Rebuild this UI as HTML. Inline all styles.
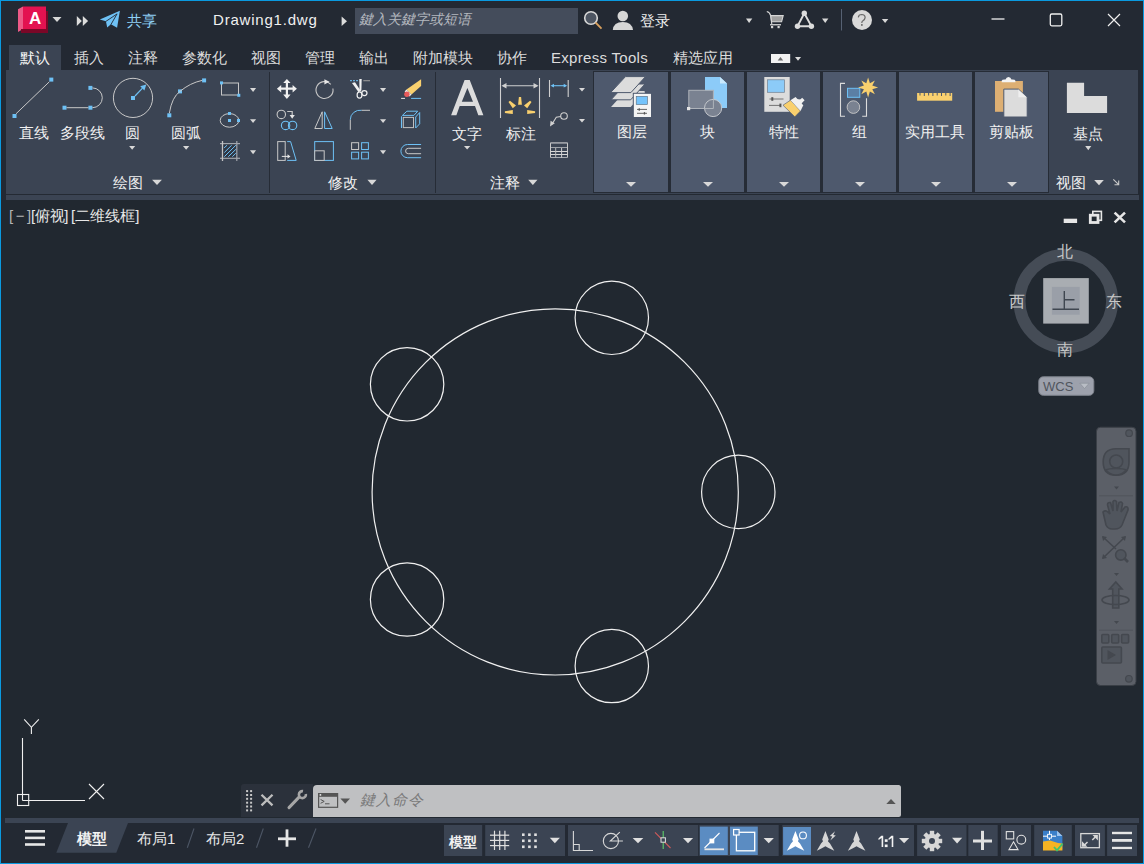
<!DOCTYPE html>
<html><head><meta charset="utf-8">
<style>
*{margin:0;padding:0;box-sizing:border-box}
html,body{width:1144px;height:864px;overflow:hidden;background:#0A9AE0;font-family:"Liberation Sans",sans-serif;color:#f0f0f0}
.a{position:absolute}
#win{position:absolute;left:1px;top:1px;width:1142px;height:862px;background:#232933;overflow:hidden}
.t{position:absolute;white-space:nowrap;font-size:15px;line-height:1}
svg{position:absolute;overflow:visible}
</style></head><body>
<div id="win"></div>
<!-- title bar -->
<div class="a" style="left:355px;top:8px;width:223px;height:26px;background:#444c5b"></div>
<!-- TITLE -->
<svg class="a" style="left:0;top:0" width="1144" height="40">
<polygon points="18,9.3 23,6.5 23,29 18,32" fill="#ec5a87"/>
<rect x="23" y="6.5" width="23" height="22.5" fill="#e31250"/>
<polygon points="21,29 46,29 46,11 48,11 48,33 21,33" fill="#7b0727"/>
<polygon points="52.5,17 61.5,17 57,22" fill="#d8d8d8"/>
<polygon points="76.8,16 81.8,21 76.8,26" fill="#dcdcdc"/>
<polygon points="82.8,16 88.1,21 82.8,26" fill="#dcdcdc"/>
<polygon points="119.9,10.8 99.8,19.45 105.9,21.2 107.2,27.6 110.9,24.3 117.1,27.8" fill="#6ec1f5"/>
<path d="M105.6,21.6 L117.2,13.8 M110.9,24.6 L117,14" stroke="#222832" stroke-width="0.9" fill="none"/>
<polygon points="346,16.6 341.5,21.3 341.5,26" fill="none"/>
<polygon points="341.6,16.6 347,21.3 341.6,26" fill="#dcdcdc"/>
<circle cx="591" cy="18" r="6.3" fill="#4d5562" stroke="#d8d8d8" stroke-width="1.6"/>
<line x1="595.5" y1="22.5" x2="601.5" y2="28.7" stroke="#d9a05e" stroke-width="1.8"/>
<circle cx="622.8" cy="16" r="5.3" fill="#d6d6d6"/>
<path d="M612.8,30 Q613.5,22 622.8,22 Q632,22 633,30 Z" fill="#d6d6d6"/>
<polygon points="746,18.6 752.3,18.6 749.1,23" fill="#d8d8d8"/>
<polygon points="822,18.6 828.4,18.6 825.2,23" fill="#d8d8d8"/>
<polygon points="881.9,18.9 888.3,18.9 885.1,22.9" fill="#d8d8d8"/>
<rect x="841" y="9" width="1" height="21.5" fill="#566173"/>
<circle cx="862" cy="20" r="10" fill="#d9d9d9"/>
<path d="M858.3,17.4 Q858.6,14.5 861.7,14.5 Q865.1,14.6 865.1,17.6 Q865,19.6 862.7,20.9 Q861.8,21.6 861.8,23" fill="none" stroke="#6a6a6a" stroke-width="1.2"/>
<rect x="861" y="24.1" width="1.7" height="1.7" fill="#6a6a6a"/>
<path d="M766.8,11.5 Q769.8,12.3 770.6,15.5 L771.8,24.2" fill="none" stroke="#d6d6d6" stroke-width="1.1"/>
<polygon points="770.8,15.6 783.2,15.6 781.6,21.8 771.6,21.8" fill="#9f9f9f" stroke="#d6d6d6" stroke-width="1.1"/>
<rect x="770" y="24.1" width="11" height="1.3" fill="#d6d6d6"/>
<rect x="771" y="26" width="2.2" height="2.2" fill="#d6d6d6"/>
<rect x="777.5" y="26" width="2.2" height="2.2" fill="#d6d6d6"/>
<path d="M804.3,13.3 L797.5,26.2 L811.4,26.2 Z" fill="none" stroke="#dcdcdc" stroke-width="1.9"/>
<circle cx="804.3" cy="13.3" r="2.7" fill="#dcdcdc"/>
<circle cx="797.5" cy="26.2" r="2.7" fill="#dcdcdc"/>
<circle cx="811.4" cy="26.2" r="2.7" fill="#dcdcdc"/>
<line x1="991.5" y1="19" x2="1004.5" y2="19" stroke="#f0f0f0" stroke-width="1.3"/>
<rect x="1050.3" y="14" width="11.5" height="11.8" rx="1.5" fill="none" stroke="#f0f0f0" stroke-width="1.3"/>
<path d="M1108,14 L1120,26 M1120,14 L1108,26" stroke="#f0f0f0" stroke-width="1.2"/>
</svg>
<div class="t" style="left:29px;top:10px;font-size:17px;font-weight:bold;color:#fff">A</div>
<div class="t" style="left:127px;top:13px;color:#8fd0f5">共享</div>
<div class="t" style="left:213px;top:12px;font-size:15px;letter-spacing:0.8px;color:#f0f0f0">Drawing1.dwg</div>
<div class="t" style="left:359px;top:12px;font-size:14px;color:#b4b8bf;font-style:italic">鍵入关鍵字或短语</div>
<div class="t" style="left:640px;top:13px;color:#f0f0f0">登录</div>
<!-- ribbon -->
<div class="a" style="left:9px;top:45px;width:52px;height:25px;background:#3b4453"></div>
<div class="a" style="left:6px;top:70px;width:1132px;height:124px;background:#3b4453"></div>
<!-- TABS -->
<div class="t" style="left:20px;top:50px;color:#f4f4f4">默认</div>
<div class="t" style="left:74px;top:50px;color:#dcdcdc">插入</div>
<div class="t" style="left:128px;top:50px;color:#dcdcdc">注释</div>
<div class="t" style="left:182px;top:50px;color:#dcdcdc">参数化</div>
<div class="t" style="left:251px;top:50px;color:#dcdcdc">视图</div>
<div class="t" style="left:305px;top:50px;color:#dcdcdc">管理</div>
<div class="t" style="left:359px;top:50px;color:#dcdcdc">输出</div>
<div class="t" style="left:413px;top:50px;color:#dcdcdc">附加模块</div>
<div class="t" style="left:497px;top:50px;color:#dcdcdc">协作</div>
<div class="t" style="left:551px;top:50px;color:#dcdcdc;letter-spacing:0.3px">Express Tools</div>
<div class="t" style="left:673px;top:50px;color:#dcdcdc">精选应用</div>
<svg class="a" style="left:0;top:40px" width="1144" height="30">
<rect x="771" y="14" width="19.2" height="9" fill="#f2f2f2"/>
<polygon points="777.7,20.6 783.2,20.6 780.45,16.9" fill="#6a6a6a"/>
<polygon points="795,16.9 801.1,16.9 798,20.8" fill="#dcdcdc"/>
</svg>

<div class="a" style="left:6px;top:194px;width:1132px;height:1px;background:#242a33"></div>
<div class="a" style="left:6px;top:195px;width:1133px;height:5px;background:#3b4453"></div>
<!-- RIBBON CONTENT -->
<div class="a" style="left:269px;top:72px;width:1px;height:121px;background:#262c36"></div>
<div class="a" style="left:435px;top:72px;width:1px;height:121px;background:#262c36"></div>
<div class="a" style="left:593px;top:71px;width:456px;height:122px;background:#262c36"></div>
<div class="a" style="left:594px;top:72px;width:74px;height:120px;background:#4e596d"></div>
<div class="a" style="left:671px;top:72px;width:73px;height:120px;background:#4e596d"></div>
<div class="a" style="left:747px;top:72px;width:73px;height:120px;background:#4e596d"></div>
<div class="a" style="left:823px;top:72px;width:73px;height:120px;background:#4e596d"></div>
<div class="a" style="left:899px;top:72px;width:73px;height:120px;background:#4e596d"></div>
<div class="a" style="left:975px;top:72px;width:73px;height:120px;background:#4e596d"></div>
<svg class="a" style="left:0;top:0" width="1144" height="200">
<g fill="#6ec1f5">
<rect x="49.3" y="77.6" width="4" height="4"/><rect x="12.5" y="114" width="4" height="4"/>
<rect x="62.5" y="105.7" width="4" height="4"/><rect x="88.4" y="105.7" width="4" height="4"/><rect x="88.4" y="85.9" width="4" height="4"/>
<rect x="131" y="96" width="4" height="4"/>
<rect x="167.3" y="113.3" width="4" height="4"/><rect x="178" y="89.4" width="4" height="4"/><rect x="202.1" y="78.4" width="4" height="4"/>
<polygon points="146.3,84.4 140.2,86.3 144.4,90.5"/>
</g>
<g fill="none" stroke="#c8c8c8" stroke-width="1">
<line x1="16" y1="113.8" x2="49.3" y2="81.8"/>
<line x1="66.5" y1="107.7" x2="88.4" y2="107.7"/>
<path d="M92.4,87.9 A9.9,9.9 0 0 1 92.4,107.7"/>
<circle cx="133" cy="97.9" r="19.6"/>
<path d="M169.3,113.3 Q172,97 180,91.4 Q190,83 202.1,80.4"/>
</g>
<line x1="135" y1="96" x2="142.5" y2="88.2" stroke="#6ec1f5" stroke-width="1.2"/>
<g fill="#d8d8d8">
<polygon points="129.1,146 135.2,146 132.15,149.7"/>
<polygon points="183,146 189.3,146 186.15,149.7"/>
<polygon points="152.1,179.8 161.9,179.8 157,185"/>
<polygon points="367.4,179.8 376.6,179.8 372,185"/>
<polygon points="528.2,179.8 537.5,179.8 532.85,185"/>
<polygon points="1094.2,179.9 1103.8,179.9 1099,185.3"/>
<polygon points="250,88.1 256.1,88.1 253.05,92"/>
<polygon points="250,119.2 256.1,119.2 253.05,123.1"/>
<polygon points="250,150.3 256.1,150.3 253.05,154.2"/>
<polygon points="380,88.1 386.1,88.1 383.05,92"/>
<polygon points="380,119.2 386.1,119.2 383.05,123.1"/>
<polygon points="380,150.3 386.1,150.3 383.05,154.2"/>
<polygon points="464,146.1 470.3,146.1 467.15,149.6"/>
<polygon points="579,88 585,88 582,91.6"/>
<polygon points="579,118.9 585,118.9 582,122.6"/>
<polygon points="1085.2,145.9 1091.3,145.9 1088.25,150.2"/>
<polygon points="626,181.9 636,181.9 631,186.7"/>
<polygon points="703,181.9 713,181.9 708,186.7"/>
<polygon points="779,181.9 789,181.9 784,186.7"/>
<polygon points="855,181.9 865,181.9 860,186.7"/>
<polygon points="931,181.9 941,181.9 936,186.7"/>
<polygon points="1007,181.9 1017,181.9 1012,186.7"/>
</g>
<!-- rect / ellipse / hatch -->
<rect x="221.5" y="83" width="17" height="12" fill="none" stroke="#c8c8c8" stroke-width="1"/>
<rect x="220" y="81.4" width="3" height="3" fill="#6ec1f5"/><rect x="237.3" y="93.8" width="3" height="3" fill="#6ec1f5"/>
<ellipse cx="229.5" cy="120.4" rx="9.3" ry="6.8" fill="none" stroke="#c8c8c8" stroke-width="1"/>
<rect x="228" y="112" width="3" height="3" fill="#6ec1f5"/><rect x="228" y="119" width="3" height="3" fill="#6ec1f5"/><rect x="237" y="119" width="3" height="3" fill="#6ec1f5"/>
<rect x="223" y="144" width="13.5" height="14" fill="#303744"/>
<g stroke="#a2a6ad" stroke-width="1.2"><line x1="220" y1="143.6" x2="240" y2="143.6"/><line x1="220" y1="158.3" x2="240" y2="158.3"/><line x1="236.8" y1="141" x2="236.8" y2="161"/></g>
<line x1="222.5" y1="141" x2="222.5" y2="161" stroke="#c4c4c4" stroke-width="1.3"/>
<g stroke="#6ec1f5" stroke-width="1"><line x1="224.1" y1="147.9" x2="227.1" y2="145.2"/><line x1="224.3" y1="152.5" x2="231.7" y2="145.2"/><line x1="224.3" y1="156.7" x2="235.9" y2="145.2"/><line x1="228.3" y1="156.7" x2="235.9" y2="149.3"/><line x1="232.4" y1="156.7" x2="235.9" y2="153.2"/></g>
<!-- modify panel -->
<g fill="#f0f0f0">
<path d="M286.9,78.9 L290.6,83 L288,83 L288,87.6 L292.6,87.6 L292.6,85 L296.9,88.7 L292.6,92.4 L292.6,89.8 L288,89.8 L288,94.4 L290.6,94.4 L286.9,98.9 L283.2,94.4 L285.8,94.4 L285.8,89.8 L281.2,89.8 L281.2,92.4 L276.9,88.7 L281.2,85 L281.2,87.6 L285.8,87.6 L285.8,83 L283.2,83 Z"/>
</g>
<path d="M330.8,84.3 A8.5,8.5 0 1 0 332.9,88.5" fill="none" stroke="#c8c8c8" stroke-width="1.1"/>
<polygon points="324.4,79.2 329.5,81.7 324.4,84.4" fill="#e6e6e6"/>
<circle cx="281.3" cy="114.4" r="4.2" fill="none" stroke="#c8c8c8" stroke-width="1.1"/>
<path d="M287.2,111.5 L292.2,111.5 L292.2,115.5" fill="none" stroke="#c8c8c8" stroke-width="1.2"/>
<polygon points="289.6,115 294.8,115 292.2,118.8" fill="#e6e6e6"/>
<circle cx="285.6" cy="125.4" r="4.2" fill="none" stroke="#6ec1f5" stroke-width="1.1"/>
<circle cx="292.6" cy="125.4" r="4.2" fill="none" stroke="#6ec1f5" stroke-width="1.1"/>
<polygon points="322.2,111.8 314.8,128.5 322.2,128.5" fill="none" stroke="#c8c8c8" stroke-width="1"/>
<polygon points="324.6,111.8 332.2,128.5 324.6,128.5" fill="none" stroke="#6ec1f5" stroke-width="1"/>
<rect x="277.7" y="141.6" width="7.5" height="18.8" fill="none" stroke="#c8c8c8" stroke-width="1"/>
<path d="M287.2,141.6 L290.6,141.6 L296.2,160.4 L287.2,160.4" fill="none" stroke="#6ec1f5" stroke-width="1"/>
<line x1="281.8" y1="156.4" x2="288" y2="156.4" stroke="#e6e6e6" stroke-width="1"/>
<polygon points="287.5,154.2 290.5,156.4 287.5,158.6" fill="#e6e6e6"/>
<rect x="314.7" y="141.6" width="18.7" height="18.8" fill="none" stroke="#6ec1f5" stroke-width="1"/>
<rect x="314.7" y="150.8" width="9.5" height="9.6" fill="#3b4453" stroke="#c8c8c8" stroke-width="1"/>
<!-- trim -->
<line x1="350" y1="80.7" x2="359" y2="80.7" stroke="#6ec1f5" stroke-width="1" stroke-dasharray="2,1"/>
<line x1="363.3" y1="80.7" x2="370" y2="80.7" stroke="#9a9a9a" stroke-width="1.1"/>
<polygon points="352,83 355,82.3 360.3,90.2 358.6,92.2" fill="#f0f0f0"/>
<polygon points="359.3,79 361.7,79 361.4,90.5 359.5,91.8" fill="#f0f0f0"/>
<ellipse cx="359.5" cy="95" rx="2.4" ry="3.2" fill="none" stroke="#f0f0f0" stroke-width="1.2"/>
<ellipse cx="364.4" cy="93.1" rx="2.6" ry="2.5" fill="none" stroke="#f0f0f0" stroke-width="1.2"/>
<!-- erase -->
<polygon points="421.1,79.2 421.1,86 411.5,94.5 406.5,89.5" fill="#f9d06e"/>
<polygon points="406.5,89.5 411.5,94.5 409.6,96.4 404.6,91.4" fill="#eeeeee"/>
<circle cx="406.9" cy="94.3" r="2.7" fill="#e85a5a"/>
<line x1="401.1" y1="98.4" x2="405" y2="98.4" stroke="#e6e6e6" stroke-width="1"/>
<line x1="411.1" y1="98.4" x2="421.1" y2="98.4" stroke="#6ec1f5" stroke-width="1"/>
<!-- fillet -->
<path d="M350.3,119.8 A9.8,9.5 0 0 1 361.7,110.3" fill="none" stroke="#6ec1f5" stroke-width="1"/>
<line x1="350.3" y1="119.8" x2="350.3" y2="129.8" stroke="#c8c8c8" stroke-width="1"/>
<line x1="361.7" y1="110.3" x2="370" y2="110.3" stroke="#c8c8c8" stroke-width="1"/>
<!-- 3d box -->
<polygon points="402.4,115.4 406.9,111.2 417.7,111.2 413.9,115.4" fill="none" stroke="#6ec1f5" stroke-width="1"/>
<polygon points="415.7,117 419.7,112.5 419.7,123.8 415.7,128" fill="none" stroke="#6ec1f5" stroke-width="1"/>
<line x1="401.5" y1="116.3" x2="401.5" y2="128" stroke="#6ec1f5" stroke-width="1.1"/>
<rect x="403.3" y="117.4" width="10.2" height="10.2" fill="none" stroke="#c0c0c0" stroke-width="1"/>
<!-- array -->
<rect x="351.6" y="142.7" width="7" height="6.8" fill="none" stroke="#c8c8c8" stroke-width="1"/>
<rect x="361.6" y="142.7" width="6.8" height="6.8" fill="none" stroke="#6ec1f5" stroke-width="1"/>
<rect x="351.6" y="152.2" width="7" height="6.7" fill="none" stroke="#6ec1f5" stroke-width="1"/>
<rect x="361.6" y="152.2" width="6.8" height="6.7" fill="none" stroke="#6ec1f5" stroke-width="1"/>
<!-- offset -->
<path d="M421.1,144.5 L407.5,144.5 A6.6,6.6 0 0 0 407.5,157.7 L421.1,157.7" fill="none" stroke="#6ec1f5" stroke-width="1"/>
<path d="M421.1,148.3 L408.3,148.3 A2.7,2.7 0 0 0 408.3,153.7 L421.1,153.7" fill="none" stroke="#c8c8c8" stroke-width="1"/>
<!-- text A -->
<path d="M451.1,115.2 L464.6,80.1 L469.7,80.1 L483.4,115.2 L478.3,115.2 L475,106 L459.7,106 L456.4,115.2 Z M461.8,101.7 L473,101.7 L467.4,88 Z" fill="#dcdcdc" fill-rule="evenodd"/>
<!-- dim -->
<g stroke="#d0d0d0" stroke-width="1.1" fill="none">
<line x1="500.5" y1="78" x2="500.5" y2="118"/><line x1="539.5" y1="78" x2="539.5" y2="118"/>
<line x1="503" y1="85.7" x2="537" y2="85.7"/>
</g>
<polygon points="501.5,85.7 506.5,83 506.5,88.4" fill="#d0d0d0"/>
<polygon points="538.5,85.7 533.5,83 533.5,88.4" fill="#d0d0d0"/>
<g fill="#f9d06e">
<polygon points="518.9,97 521.1,97 521.9,104.8 518.1,104.8"/>
<polygon points="508.5,102 510,100.8 516,105.6 512.8,108.2"/>
<polygon points="531.5,102 530,100.8 524,105.6 527.2,108.2"/>
<polygon points="504.9,111.3 512.8,110 512.8,114 504.9,113.1"/>
<polygon points="535.1,111.3 527.2,110 527.2,114 535.1,113.1"/>
</g>
<g stroke="#d0d0d0" stroke-width="1.1"><line x1="549.5" y1="80" x2="549.5" y2="97"/><line x1="568.2" y1="80" x2="568.2" y2="97"/></g>
<line x1="552" y1="85.7" x2="566" y2="85.7" stroke="#6ec1f5" stroke-width="1.1"/>
<polygon points="550.5,85.7 554,83.8 554,87.6" fill="#6ec1f5"/><polygon points="567.2,85.7 563.7,83.8 563.7,87.6" fill="#6ec1f5"/>
<circle cx="564" cy="116" r="3.3" fill="none" stroke="#d0d0d0" stroke-width="1.1"/>
<path d="M560.7,116.5 L556.3,117.3 L551.8,124.5" fill="none" stroke="#d0d0d0" stroke-width="1.1"/>
<polygon points="550,126.5 550.6,120.8 554.8,123.3" fill="#d0d0d0"/>
<g fill="none" stroke-width="1">
<path d="M550.5,157.5 L550.5,142.9 L567.5,142.9 L567.5,157.5" stroke="#c8c8c8"/>
<line x1="550.5" y1="142.9" x2="567.5" y2="142.9" stroke="#9ea2a8"/>
<line x1="551" y1="147.5" x2="567" y2="147.5" stroke="#9ea2a8"/>
<line x1="550.5" y1="151.5" x2="567.5" y2="151.5" stroke="#d8d8d8"/>
<line x1="550.5" y1="154.5" x2="567.5" y2="154.5" stroke="#d8d8d8"/>
<line x1="550.5" y1="157.5" x2="567.5" y2="157.5" stroke="#a8acb2"/>
<line x1="555.7" y1="148" x2="555.7" y2="157.5" stroke="#b8b8b8"/>
<line x1="561.6" y1="148" x2="561.6" y2="157.5" stroke="#d0d0d0"/>
</g>
</svg>
<svg class="a" style="left:0;top:0" width="1144" height="200">
<!-- layers -->
<g fill="#dcdcdc">
<polygon points="625.5,91 645,91 630.7,107 611,107"/>
</g>
<g fill="#dcdcdc" stroke="#4e596d" stroke-width="1">
<polygon points="625.5,84 645,84 630.7,99.8 611,99.8"/>
<polygon points="625.5,76.6 645.5,76.6 630.9,92.6 610.6,92.6"/>
</g>
<rect x="638.5" y="91.6" width="6.3" height="3" rx="1" fill="#dcdcdc"/>
<rect x="633.3" y="93.3" width="18.2" height="24.2" fill="#f4f4f4" stroke="#4e596d" stroke-width="1"/>
<rect x="636.2" y="96.3" width="11.3" height="8.3" fill="#74c3fb" stroke="#5a6a7a" stroke-width="0.6"/>
<g stroke="#555" stroke-width="0.9"><line x1="637" y1="109.4" x2="647" y2="109.4"/><line x1="637" y1="113.3" x2="647" y2="113.3"/></g>
<rect x="638.6" y="108.3" width="1.3" height="2.4" fill="#555"/><rect x="643.8" y="112.1" width="1.3" height="2.4" fill="#555"/>
<!-- block -->
<polygon points="705,77 720,77 727,83.6 727,108 705,108" fill="#8ccbf8"/>
<polygon points="720,77 727,83.6 720,83.6" fill="#c9e8fc"/>
<rect x="688.8" y="90.3" width="24.6" height="18.2" fill="#7a8291" stroke="#aeb3ba" stroke-width="1"/>
<circle cx="713.1" cy="108" r="8.6" fill="#7a8291" stroke="#c4c7cc" stroke-width="1"/>
<path d="M713.4,99.4 L713.4,108.5 L704.5,108.5" fill="none" stroke="#aeb3ba" stroke-width="1"/>
<rect x="687" y="107" width="3.2" height="3.2" fill="#e6e6e6"/>
<!-- properties -->
<rect x="764.3" y="77" width="25.4" height="34.8" fill="#dcdcdc"/>
<rect x="767.6" y="79.8" width="16.8" height="12.5" fill="#8ccbf8" stroke="#6f7f90" stroke-width="0.7"/>
<g stroke="#666" stroke-width="0.9"><line x1="769.5" y1="99" x2="783.5" y2="99"/><line x1="769" y1="105.4" x2="781" y2="105.4"/></g>
<rect x="771.3" y="97.2" width="2" height="3.6" fill="#555"/><rect x="779.4" y="103.6" width="2" height="3.6" fill="#555"/>
<polygon points="783,105.2 790.5,100.2 800.5,111 794.8,116.8" fill="#f9d06e" stroke="#4e596d" stroke-width="0.6"/>
<polygon points="790.5,100.2 795.6,97 803.3,105.2 800.5,111" fill="#f0f0f0"/>
<polygon points="796,99 800.8,99.5 802.9,101.2 801,104" fill="#f0f0f0"/>
<rect x="799.5" y="98" width="3.5" height="6" fill="#f0f0f0" transform="rotate(45 801.2 101)"/>
<!-- group -->
<path d="M845,83.4 L840.5,83.4 L840.5,116.3 L845,116.3" fill="none" stroke="#dcdcdc" stroke-width="1.1"/>
<path d="M862.2,116.3 L866.5,116.3 L866.5,98.2" fill="none" stroke="#dcdcdc" stroke-width="1.1"/>
<rect x="847.5" y="88.3" width="12.3" height="9" fill="#5b7fa5" stroke="#6ec1f5" stroke-width="1"/>
<circle cx="853.4" cy="107.1" r="6.3" fill="#7a8291" stroke="#c8c8c8" stroke-width="0.9"/>
<polygon points="868.1,77.4 869.9,83.2 874.9,80.6 872.3,85.6 878.1,87.4 872.3,89.2 874.9,94.2 869.9,91.6 868.1,97.4 866.3,91.6 861.3,94.2 863.9,89.2 858.1,87.4 863.9,85.6 861.3,80.6 866.3,83.2" fill="#f9d06e"/>
<!-- ruler -->
<rect x="917.1" y="93" width="35.1" height="7.7" fill="#f9d06e"/>
<g fill="#4e596d"><rect x="919.5" y="93" width="1" height="2.5"/><rect x="923.8" y="93" width="1" height="3"/><rect x="928.1" y="93" width="1" height="2.5"/><rect x="932.4" y="93" width="1" height="3"/><rect x="936.7" y="93" width="1" height="2.5"/><rect x="941" y="93" width="1" height="3"/><rect x="945.3" y="93" width="1" height="2.5"/><rect x="949.6" y="93" width="1" height="3"/></g>
<!-- clipboard -->
<rect x="995" y="81" width="27.9" height="30.8" fill="#ddaf73"/>
<path d="M1001.7,82.3 L1001.7,80.8 Q1002,79.6 1004.5,79.6 L1005.5,79.6 Q1006.3,77.1 1008.5,77.1 Q1010.7,77.1 1011.5,79.6 L1012.7,79.6 Q1015.2,79.6 1015.4,80.8 L1015.4,82.3 Z" fill="#f4f4f4"/>
<polygon points="1003.8,89.1 1018.4,89.1 1027.2,97.3 1027.2,117 1003.8,117" fill="#dcdcdc" stroke="#4e596d" stroke-width="1"/>
<polygon points="1018.4,89.6 1026.7,97.3 1018.4,97.3" fill="#efefef"/>
<!-- base point -->
<polygon points="1066.9,82.8 1084.1,82.8 1084.1,96.1 1107.1,96.1 1107.1,112.9 1066.9,112.9" fill="#dcdcdc"/>
<path d="M1113.3,179.3 L1118.7,184.7 M1118.7,180.5 L1118.7,184.7 L1114.5,184.7" fill="none" stroke="#c8c8c8" stroke-width="1.1"/>
</svg>
<div class="t" style="left:19px;top:125px">直线</div>
<div class="t" style="left:60px;top:125px">多段线</div>
<div class="t" style="left:125px;top:125px">圆</div>
<div class="t" style="left:171px;top:125px">圆弧</div>
<div class="t" style="left:113px;top:175px">绘图</div>
<div class="t" style="left:328px;top:175px">修改</div>
<div class="t" style="left:490px;top:175px">注释</div>
<div class="t" style="left:452px;top:126px">文字</div>
<div class="t" style="left:506px;top:126px">标注</div>
<div class="t" style="left:617px;top:124px">图层</div>
<div class="t" style="left:700px;top:124px">块</div>
<div class="t" style="left:769px;top:124px">特性</div>
<div class="t" style="left:852px;top:124px">组</div>
<div class="t" style="left:905px;top:124px">实用工具</div>
<div class="t" style="left:989px;top:124px">剪贴板</div>
<div class="t" style="left:1073px;top:126px">基点</div>
<div class="t" style="left:1056px;top:175px">视图</div>
<!-- viewport -->
<div class="a" style="left:1px;top:200px;width:1142px;height:618px;background:#212830"></div>
<!-- UCS -->
<svg class="a" style="left:0;top:700px" width="1144" height="164">
<g fill="none" stroke="#f0f0f0" stroke-width="1.1">
<line x1="22.5" y1="38" x2="22.5" y2="100.5"/>
<line x1="22.5" y1="100.5" x2="85" y2="100.5"/>
<rect x="17.5" y="94.5" width="11.2" height="11"/>
<path d="M24.2,19.3 L31.4,27.3 L38.8,19.3 M31.4,27.3 L31.4,34"/>
<path d="M89,84 L104,99 M104,84 L89,99"/>
</g>
</svg>
<!-- COMMAND LINE -->
<div class="a" style="left:241px;top:784px;width:72px;height:33px;background:#2b313b;border-radius:3px 0 0 0"></div>
<div class="a" style="left:313px;top:785px;width:588px;height:32px;background:#bfc0c2;border-radius:4px 2.5px 2.5px 0"></div>
<svg class="a" style="left:0;top:770px" width="1144" height="50">
<g fill="#c8c8c8"><rect x="246.1" y="20.1" width="2" height="2"/><rect x="250.1" y="20.1" width="2" height="2"/><rect x="246.1" y="24.0" width="2" height="2"/><rect x="250.1" y="24.0" width="2" height="2"/><rect x="246.1" y="27.8" width="2" height="2"/><rect x="250.1" y="27.8" width="2" height="2"/><rect x="246.1" y="31.7" width="2" height="2"/><rect x="250.1" y="31.7" width="2" height="2"/><rect x="246.1" y="35.5" width="2" height="2"/><rect x="250.1" y="35.5" width="2" height="2"/><rect x="246.1" y="39.4" width="2" height="2"/><rect x="250.1" y="39.4" width="2" height="2"/></g>
<path d="M261.5,24.7 L272.5,35.4 M272.5,24.7 L261.5,35.4" stroke="#bdbdbd" stroke-width="2.3"/>
<path d="M289,37.6 L298.8,27.4" stroke="#a6a6a6" stroke-width="3" stroke-linecap="round"/>
<path d="M303,21.15 A3.5,3.5 0 1 0 305.85,23.99" fill="none" stroke="#a6a6a6" stroke-width="2.6"/>
<rect x="318.6" y="23.6" width="19" height="13.7" fill="none" stroke="#555" stroke-width="1.2"/>
<rect x="318.6" y="23.4" width="19" height="3.4" fill="#555"/>
<rect x="319.6" y="24.1" width="1.6" height="1.6" fill="#eee"/>
<path d="M320.6,29.5 L324.2,31.4 L320.6,33.3 M325,33.8 L329.5,33.8" fill="none" stroke="#555" stroke-width="1"/>
<polygon points="340.4,28.6 350,28.6 345.2,33.8" fill="#555"/>
<polygon points="886.3,34 895.7,34 891,28.9" fill="#555555"/>
</svg>
<div class="t" style="left:360px;top:792px;font-size:15px;color:#7a7a7a;font-style:italic;letter-spacing:1px">鍵入命令</div>
<!-- status strip -->
<div class="a" style="left:5px;top:818px;width:1134px;height:5px;background:#3b4453"></div>
<!-- VIEWPORT UI -->
<div class="t" style="left:9px;top:208px;font-size:15px;color:#b4b4b4;letter-spacing:2.5px">[−]</div>
<div class="t" style="left:31px;top:208px;font-size:15px;color:#e8e8e8;letter-spacing:-0.3px">[俯视]</div>
<div class="t" style="left:71px;top:208px;font-size:15px;color:#e8e8e8;letter-spacing:0px">[二维线框]</div>
<svg class="a" style="left:0;top:200px" width="1144" height="620">
<rect x="1063.7" y="18.7" width="13.4" height="4.3" fill="#e6e6e6"/>
<rect x="1092.8" y="11.4" width="8.6" height="8.9" fill="none" stroke="#e6e6e6" stroke-width="1.6"/>
<rect x="1090.3" y="15.2" width="7.7" height="7.3" fill="#212830" stroke="#e6e6e6" stroke-width="2.8"/>
<path d="M1114.6,12.6 L1125,22.4 M1125,12.6 L1114.6,22.4" stroke="#e6e6e6" stroke-width="2.6"/>
<!-- viewcube -->
<circle cx="1065.8" cy="101.1" r="46.3" fill="none" stroke="#454c56" stroke-width="12"/>
<rect x="1043.2" y="78.1" width="45.6" height="45.5" fill="#a9adb2"/>
<rect x="1051.9" y="86.9" width="27.8" height="27.8" fill="#9a9fa8"/>
<path d="M1052.5,109.2 L1079,109.2 M1064.3,91 L1064.3,109 M1064.3,99.8 L1074.5,99.8" stroke="#3f4650" stroke-width="1.4" fill="none"/>
<!-- wcs -->
<rect x="1038.8" y="176.8" width="55" height="18.5" rx="4.5" fill="#9da1ac" stroke="#7f848d" stroke-width="1"/>
<polygon points="1079.8,183.2 1089.2,183.2 1084.5,188.6" fill="#b9bdc5" stroke="#8a8f98" stroke-width="0.7"/>
<!-- navbar -->
<rect x="1096.5" y="227.2" width="39.5" height="258.3" rx="4" fill="#5b5f67" stroke="#3a3f46" stroke-width="1"/>
<g fill="#50555d" stroke="#44484f" stroke-width="1.6">
<circle cx="1129.1" cy="233.2" r="3.3" stroke-width="1.2"/>
<path d="M1103.2,262 Q1103.2,248.8 1116,248.8 L1129,248.8 L1129,262 Q1129,275.2 1116,275.2 Q1103.2,275.2 1103.2,262 Z"/>
<circle cx="1116.2" cy="261.5" r="6.5"/>
<path d="M1106,270 Q1108,268.5 1116,268.5 Q1124,268.5 1126,270 Q1122,275 1116,275 Q1110,275 1106,270 Z"/>
<path d="M1103,312 Q1106,309 1110,314 L1107.5,305 Q1107.5,302 1110.5,302.5 L1113,311 L1113,301.5 Q1114.5,299.5 1116.5,301.5 L1117,311 L1119,302.5 Q1121.5,301 1122.5,303.5 L1121,312 L1125,307 Q1128.5,306 1128,310 L1122,325 Q1120,329 1115,329 L1112,329 Q1108,329 1106,325 Z"/>
<circle cx="1120.8" cy="354.9" r="5.2"/>
<path d="M1112.7,408 L1112.7,389 L1109.5,389 L1115.8,382 L1122,389 L1118.8,389 L1118.8,408 Z"/>
<rect x="1101.8" y="434.5" width="7" height="8.5" rx="1"/><rect x="1111.7" y="434.5" width="7" height="8.5" rx="1"/><rect x="1121.6" y="434.5" width="7" height="8.5" rx="1"/>
<rect x="1101.8" y="447" width="19.6" height="16" rx="1"/>
<circle cx="1128.9" cy="478.8" r="3.3" stroke-width="1.2"/>
</g>
<g fill="none" stroke="#44484f" stroke-width="1.6">
<path d="M1103,337 L1116,349 M1125,337 L1103,358"/>
<line x1="1124.5" y1="358.5" x2="1128" y2="362" stroke-width="2.6"/>
<ellipse cx="1115.5" cy="400" rx="13.5" ry="4.5"/>
</g>
<g stroke="#50555c" stroke-width="1"><line x1="1099" y1="295.8" x2="1133" y2="295.8"/><line x1="1099" y1="430.2" x2="1133" y2="430.2"/></g>
<g fill="#44484f">
<polygon points="1114,286.5 1119,286.5 1116.5,289.5"/>
<polygon points="1114,373 1119,373 1116.5,376"/>
<polygon points="1114,421 1119,421 1116.5,424"/>
<polygon points="1107.5,450 1116,455 1107.5,460"/>
<polygon points="1102,336 1107,337 1103,341"/><polygon points="1126,336 1121,337 1125,341"/><polygon points="1102,359 1103,354 1107,358"/>
</g>
</svg>
<div class="t" style="left:1057px;top:244px;font-family:'Liberation Serif',serif;font-size:16px;color:#c8c8c8">北</div>
<div class="t" style="left:1057px;top:342px;font-family:'Liberation Serif',serif;font-size:16px;color:#c8c8c8">南</div>
<div class="t" style="left:1009px;top:294px;font-family:'Liberation Serif',serif;font-size:16px;color:#c8c8c8">西</div>
<div class="t" style="left:1106px;top:294px;font-family:'Liberation Serif',serif;font-size:16px;color:#c8c8c8">东</div>
<div class="t" style="left:1043px;top:380px;font-size:13px;color:#50555d">WCS</div>
<svg class="a" style="left:0;top:0" width="1144" height="864">
<g fill="none" stroke="#f0f0f0" stroke-width="1.2">
<circle cx="555.2" cy="491.9" r="183.1"/>
<circle cx="738.3" cy="491.9" r="36.7"/>
<circle cx="611.8" cy="317.8" r="36.7"/>
<circle cx="407.1" cy="384.3" r="36.7"/>
<circle cx="407.1" cy="599.5" r="36.7"/>
<circle cx="611.8" cy="666.0" r="36.7"/>
</g>
</svg>
<!-- STATUS BAR -->
<svg class="a" style="left:0;top:818px" width="1144" height="46">
<polygon points="68,5 128,5 116.3,34.7 56.3,34.7" fill="#3b4453"/>
<g fill="#e6e6e6"><rect x="25" y="12" width="20" height="2.6"/><rect x="25" y="18.6" width="20" height="2.6"/><rect x="25" y="25.2" width="20" height="2.6"/></g>
<g stroke="#4d5665" stroke-width="1.1"><line x1="194" y1="10.5" x2="187.3" y2="29.7"/><line x1="263.3" y1="10.5" x2="256.5" y2="29.7"/><line x1="316" y1="10.5" x2="308.5" y2="29.7"/></g>
<rect x="278" y="19.4" width="18" height="2.8" fill="#e6e6e6"/><rect x="285.6" y="11.4" width="2.8" height="17.3" fill="#e6e6e6"/>
<g fill="#3b4453">
<rect x="444" y="7" width="38.2" height="31"/>
<rect x="485.2" y="7" width="79.8" height="31"/>
<rect x="568" y="7" width="130.3" height="31"/>
<rect x="699.3" y="7" width="79.4" height="31"/>
<rect x="782.3" y="7" width="131.7" height="31"/>
<rect x="917.1" y="7" width="49.4" height="31"/>
<rect x="968.3" y="7" width="29.4" height="31"/>
<rect x="1001" y="7" width="30" height="31"/>
<rect x="1034.2" y="7" width="37.6" height="31"/>
<rect x="1075" y="7" width="29.9" height="31"/>
<rect x="1107.1" y="7" width="29.9" height="31"/>
</g>
<g fill="#5b8cc2">
<rect x="699.9" y="8.6" width="27.9" height="28.4"/>
<rect x="730" y="8.6" width="27.8" height="28.4"/>
<rect x="783.1" y="9" width="27.9" height="27.9"/>
</g>
<!-- grid -->
<g stroke="#e0e0e0" stroke-width="1.2">
<line x1="494.5" y1="12.7" x2="494.5" y2="32"/><line x1="499.7" y1="12.7" x2="499.7" y2="32"/><line x1="504.9" y1="12.7" x2="504.9" y2="32"/>
<line x1="490" y1="17.2" x2="509.2" y2="17.2"/><line x1="490" y1="22.4" x2="509.2" y2="22.4"/><line x1="490" y1="27.6" x2="509.2" y2="27.6"/>
</g>
<g fill="#e0e0e0">
<rect x="522" y="15.4" width="2.6" height="2.6"/><rect x="528.1" y="15.4" width="2.6" height="2.6"/><rect x="534.2" y="15.4" width="2.6" height="2.6"/>
<rect x="522" y="21.5" width="2.6" height="2.6"/><rect x="528.1" y="21.5" width="2.6" height="2.6"/><rect x="534.2" y="21.5" width="2.6" height="2.6"/>
<rect x="522" y="27.5" width="2.6" height="2.6"/><rect x="528.1" y="27.5" width="2.6" height="2.6"/><rect x="534.2" y="27.5" width="2.6" height="2.6"/>
</g>
<g fill="#e0e0e0">
<polygon points="549.8,19.8 559.9,19.8 554.85,25.3"/>
<polygon points="632.7,20 643.3,20 638,25.3"/>
<polygon points="683,20 693.1,20 688,25.3"/>
<polygon points="763.6,20 773.9,20 768.7,25.3"/>
<polygon points="899,20 909.2,20 904.1,25.3"/>
<polygon points="952,19.8 962.2,19.8 957.1,25.4"/>
</g>
<!-- ortho -->
<path d="M573.4,13 L573.4,32.5 L593,32.5 M573.4,26.5 L579.2,26.5 L579.2,32.5" fill="none" stroke="#d8d8d8" stroke-width="1.1"/>
<!-- polar -->
<circle cx="610.9" cy="23" r="7.6" fill="none" stroke="#d8d8d8" stroke-width="1.1"/>
<path d="M622.9,23 L610.3,23 L619.8,14.1" fill="none" stroke="#d8d8d8" stroke-width="1.1"/>
<!-- osnap track -->
<line x1="655" y1="14.3" x2="670.5" y2="30" stroke="#d05a5a" stroke-width="1.1"/>
<line x1="663.2" y1="13" x2="663.2" y2="31.1" stroke="#5fcf6a" stroke-width="1.1"/>
<rect x="661" y="19.8" width="4.4" height="4.4" fill="#3b4453" stroke="#e0e0e0" stroke-width="1"/>
<!-- lineweight/dyn -->
<path d="M704.5,30 L719.5,15" stroke="#ffffff" stroke-width="1.1"/>
<line x1="704.5" y1="31.3" x2="724" y2="31.3" stroke="#e6e6e6" stroke-width="1.8"/>
<rect x="709.5" y="20.6" width="4.8" height="4.8" fill="#ffffff"/>
<rect x="736.4" y="14.3" width="18.3" height="18.5" fill="none" stroke="#ffffff" stroke-width="1.3"/>
<rect x="733.6" y="11.5" width="5.5" height="5.5" fill="#5b8cc2" stroke="#ffffff" stroke-width="1.2"/>
<!-- annotation icons -->
<polygon points="795.4,13.1 798.7,21.4 797.9,23.2 800.0,25.5 804.3,32.8 798.5,30.0 795.4,28.3 792.3,30.0 786.8,32.8 791.0,25.5 793.0,23.2 792.2,21.4" fill="#ffffff"/>
<circle cx="803" cy="17.4" r="3.4" fill="none" stroke="#ffffff" stroke-width="1.1"/>
<polygon points="825.4,13.1 828.7,21.4 827.9,23.2 830.0,25.5 834.3,32.8 828.5,30.0 825.4,28.3 822.3,30.0 816.8,32.8 821.0,25.5 823.0,23.2 822.2,21.4" fill="#d6d6d6"/>
<polygon points="856.5,13.1 859.8,21.4 859.0,23.2 861.1,25.5 865.4,32.8 859.6,30.0 856.5,28.3 853.4,30.0 847.9,32.8 852.1,25.5 854.1,23.2 853.3,21.4" fill="#d6d6d6"/>
<polygon points="835,13.3 829.8,18 832.3,18.6 830.3,22.5 835.8,17.5 833.3,17" fill="#d6d6d6"/>
<!-- gear -->
<g transform="translate(932,23)">
<circle r="7.3" fill="#d6d6d6"/>
<g fill="#d6d6d6">
<rect x="-2.2" y="-10.2" width="4.4" height="20.4"/>
<rect x="-2.2" y="-10.2" width="4.4" height="20.4" transform="rotate(45)"/>
<rect x="-2.2" y="-10.2" width="4.4" height="20.4" transform="rotate(90)"/>
<rect x="-2.2" y="-10.2" width="4.4" height="20.4" transform="rotate(135)"/>
</g>
<circle r="3" fill="#3b4453"/>
</g>
<rect x="973" y="21.5" width="19" height="3" fill="#e0e0e0"/><rect x="981" y="12.8" width="3" height="19.2" fill="#e0e0e0"/>
<!-- shapes -->
<rect x="1006.3" y="13.6" width="7.4" height="7.3" fill="none" stroke="#e0e0e0" stroke-width="1.1"/>
<circle cx="1021.3" cy="21.7" r="4.4" fill="none" stroke="#e0e0e0" stroke-width="1.1"/>
<polygon points="1013.5,23.8 1018,31.6 1009,31.6" fill="none" stroke="#e0e0e0" stroke-width="1.1"/>
<!-- workspace -->
<polygon points="1043,12.8 1057,12.8 1062.4,18 1062.4,31.5 1043,31.5" fill="#3a7fc9"/>
<polygon points="1043,23.5 1050,22.5 1058,25 1062.4,25.5 1062.4,32.5 1043,32.5" fill="#f5b323"/>
<polygon points="1057,12.8 1062.4,18 1057,18" fill="#9cc4ef"/>
<g stroke="#ffffff" stroke-width="1"><line x1="1049.5" y1="12.8" x2="1049.5" y2="22"/><line x1="1043" y1="18.2" x2="1056" y2="18.2"/></g>
<rect x="1047.6" y="16.3" width="3.8" height="3.8" fill="#3a7fc9" stroke="#ffffff" stroke-width="0.9"/>
<path d="M1054,29 L1057,32.3 L1062.6,25.6" fill="none" stroke="#3fc46b" stroke-width="1.8"/>
<!-- fullscreen -->
<rect x="1080.8" y="15.6" width="18.6" height="14.1" fill="none" stroke="#d8d8d8" stroke-width="1.3"/>
<line x1="1092.3" y1="22" x2="1095.5" y2="18.8" stroke="#d8d8d8" stroke-width="1.5"/>
<polygon points="1092.5,17 1097.9,17 1097.9,22.4" fill="#d8d8d8"/>
<line x1="1087.5" y1="24" x2="1084.3" y2="27.2" stroke="#d8d8d8" stroke-width="1.5"/>
<polygon points="1082,23.3 1082,28.7 1087.4,28.7" fill="#d8d8d8"/>
<g fill="#e6e6e6"><rect x="1112" y="13.8" width="20" height="2.4"/><rect x="1112" y="21" width="20" height="2.8"/><rect x="1112" y="28.8" width="20" height="2.3"/></g>
</svg>
<div class="t" style="left:77px;top:831px;font-size:15px;font-weight:bold;color:#f2f2f2">模型</div>
<div class="t" style="left:137px;top:831px;font-size:15px;color:#e6e6e6">布局1</div>
<div class="t" style="left:206px;top:831px;font-size:15px;color:#e6e6e6">布局2</div>
<div class="t" style="left:449px;top:835px;font-size:14px;font-weight:bold;color:#f2f2f2">模型</div>
<svg class="a" style="left:870px;top:830px" width="30" height="20" fill="#f2f2f2">
<path d="M11.3,5.8 L13.2,5.8 L13.2,17.1 L11.6,17.1 L11.6,8.1 L8.6,10 L8.4,8.4 Z"/>
<rect x="14.8" y="9.3" width="2.8" height="2.6"/><rect x="14.8" y="14.5" width="2.8" height="2.6"/>
<path d="M21.4,5.8 L23.3,5.8 L23.3,17.1 L21.7,17.1 L21.7,8.1 L18.7,10 L18.5,8.4 Z"/>
</svg>
</body></html>
